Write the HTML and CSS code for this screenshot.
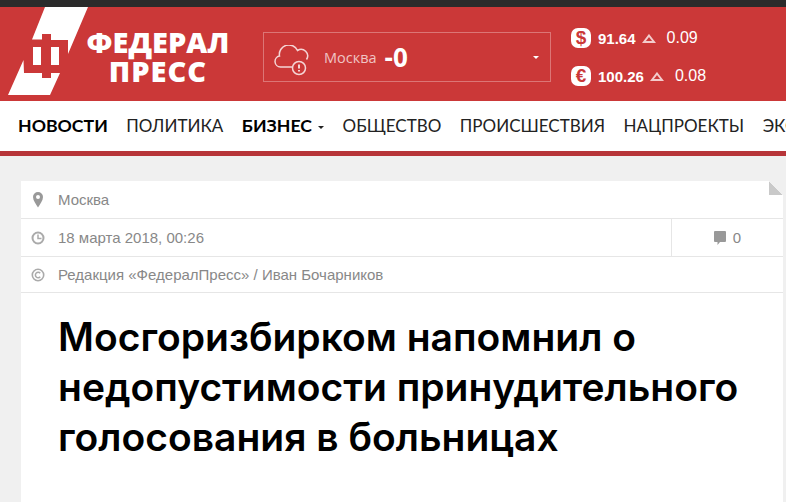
FILE: index.html
```html
<!DOCTYPE html>
<html lang="ru">
<head>
<meta charset="utf-8">
<title>ФедералПресс</title>
<link rel="stylesheet" href="styles.css">
</head>
<body>
<div class="topbar"></div>
<header class="head">
  <div class="logo">
    <svg class="logo-mark" width="90" height="94" viewBox="0 0 90 94">
      <path fill="#fff" d="M45 0H88L68 47V33H51V27H42V32.500H32Z"/>
      <path fill="#fff" d="M23.500 53L24 66H42V71H51V66H60L50 88H8Z"/>
      <path fill="#fff" d="M33 40H41V58H33ZM51 40H59V58H51Z"/>
    </svg>
    <div class="logo-text"><span>ФЕДЕРАЛ</span><span class="logo-second">ПРЕСС</span></div>
  </div>
  <div class="weather">
    <svg class="cloud" width="36" height="32" viewBox="0 0 36 32" fill="none" stroke="#f5d5d5" stroke-width="1.500">
      <path d="M18 22H6.500a5.500 5.500 0 0 1-1-10.900A9.500 9.500 0 0 1 23.500 5.500a6.500 6.500 0 0 1 9 9"/>
      <circle cx="25" cy="23" r="6.500"/>
      <path d="M25 19.500v4M25 25v1.500" stroke-width="2"/>
    </svg>
    <span class="city">Москва</span>
    <span class="temp">-0</span>
    <span class="caret"></span>
  </div>
  <div class="rates">
    <div class="rate">
      <span class="cur">$</span><b>91.64</b>
      <svg class="tri" width="14" height="9" viewBox="0 0 14 9"><path d="M7 1.500L12 8H2Z" fill="none" stroke="#f3cccc" stroke-width="2"/></svg>
      <span>0.09</span>
    </div>
    <div class="rate">
      <span class="cur">€</span><b>100.26</b>
      <svg class="tri" width="14" height="9" viewBox="0 0 14 9"><path d="M7 1.500L12 8H2Z" fill="none" stroke="#f3cccc" stroke-width="2"/></svg>
      <span>0.08</span>
    </div>
  </div>
</header>
<nav class="nav">
  <a class="strong">НОВОСТИ</a>
  <a>ПОЛИТИКА</a>
  <a class="strong drop">БИЗНЕС</a>
  <a>ОБЩЕСТВО</a>
  <a>ПРОИСШЕСТВИЯ</a>
  <a>НАЦПРОЕКТЫ</a>
  <a>ЭКОНОМИКА</a>
</nav>
<main class="card">
  <div class="row">
    <svg class="ico" width="14" height="16" viewBox="0 0 14 16"><path fill="#999" fill-rule="evenodd" d="M7 0a5 5 0 0 1 5 5c0 3.500-3 7-5 10.500C5 12 2 8.500 2 5a5 5 0 0 1 5-5Zm0 3a2 2 0 1 0 0 4 2 2 0 0 0 0-4Z"/></svg>
    <span>Москва</span>
  </div>
  <div class="row split">
    <div class="cell">
      <svg class="ico" width="14" height="14" viewBox="0 0 14 14" fill="none" stroke="#aaa" stroke-width="2"><circle cx="7" cy="7" r="5.500"/><path d="M7 3.500V7.500H10.500" stroke-width="1.500"/></svg>
      <span>18 марта 2018, 00:26</span>
    </div>
    <div class="comments">
      <svg width="12" height="14" viewBox="0 0 12 14"><path fill="#999" d="M1 0h10a1 1 0 0 1 1 1v9a1 1 0 0 1-1 1H6L3.500 14V11H1a1 1 0 0 1-1-1V1a1 1 0 0 1 1-1Z"/></svg>
      <span>0</span>
    </div>
  </div>
  <div class="row short">
    <svg class="ico" width="14" height="14" viewBox="0 0 14 14" fill="none" stroke="#aaa"><circle cx="7" cy="7" r="5.700" stroke-width="1.600"/><path d="M9.200 5.300a2.700 2.700 0 1 0 0 3.400" stroke-width="1.500"/></svg>
    <span>Редакция «ФедералПресс» / Иван Бочарников</span>
  </div>
  <h1>Мосгоризбирком напомнил о недопустимости принудительного голосования в больницах</h1>
  <span class="fold"></span>
</main>
</body>
</html>
```
FILE: styles.css
```css
* { box-sizing: border-box; }
html, body { margin: 0; height: 100%; overflow: hidden; }
body { background: #f0f0f0; font-family: "Liberation Sans", Arial, sans-serif; }
.topbar { height: 7px; background: #2b2b2b; }
.head {
  height: 94px;
  background: #cb3838;
  display: flex;
  align-items: flex-start;
}
.logo { width: 263px; display: flex; flex: none; }
.logo-mark { flex: none; }
.logo-text {
  display: flex;
  flex-direction: column;
  align-items: center;
  width: 140px;
  margin-left: -2px;
  padding-top: 20px;
  color: #fff;
  font: 800 29px/29px "Open Sans", sans-serif;
}
.logo-second { letter-spacing: 1px; }
.weather {
  flex: none;
  width: 288px;
  height: 50px;
  margin-top: 25px;
  border: 1px solid #dc7676;
  display: flex;
  align-items: center;
  padding: 0 11px 0 10px;
}
.cloud { flex: none; margin-right: 14px; margin-top: 8px; }
.city { color: #f0c4c4; font: 14.500px "Open Sans", sans-serif; }
.temp { color: #fff; font: 700 26px "Open Sans", sans-serif; margin-left: 8px; }
.caret {
  margin-left: auto;
  border: 3px solid transparent;
  border-top: 3px solid #fff;
  border-bottom: 0;
}
.rates { margin-left: 20px; padding-top: 21px; display: flex; flex-direction: column; gap: 18px; }
.rate { display: flex; align-items: center; height: 20px; color: #fff; font-size: 16px; }
.cur {
  width: 20px; height: 20px;
  background: #fff; border-radius: 7px;
  color: #cb3838; font-weight: 700; font-size: 19px; line-height: 20px; text-align: center;
  margin-right: 7px;
}
.rate b { margin-right: 6px; font-size: 15px; }
.tri { flex: none; margin-right: 11px; }
.nav {
  height: 55px;
  background: #fff;
  border-bottom: 5px solid #b73539;
  display: flex;
  align-items: center;
  gap: 18.500px;
  padding: 0 0 2px 18px;
  white-space: nowrap;
  overflow: hidden;
  font: 17px Lato, sans-serif;
  color: #222;
}
.strong { font-weight: 700; font-size: 17.700px; color: #000; }
.drop::after {
  content: "";
  display: inline-block;
  margin-left: 6px;
  vertical-align: 3px;
  border: 3px solid transparent;
  border-top-color: #222;
  border-bottom: 0;
}
.card {
  position: relative;
  margin: 25px 3px 0 21px;
  background: #fff;
  height: 321px;
}
.row {
  display: flex;
  align-items: center;
  height: 38px;
  border-bottom: 1px solid #e6e6e6;
  padding-left: 10px;
  color: #888;
  font-size: 15px;
}
.row.short { height: 36px; }
.row.split { padding: 0; }
.cell { display: flex; align-items: center; flex: 1; height: 100%; padding-left: 10px; }
.ico { flex: none; margin-right: 13px; }
.comments {
  width: 112px; height: 100%;
  border-left: 1px solid #e6e6e6;
  display: flex; align-items: center; justify-content: center; gap: 7px;
}
h1 {
  margin: 19px 0 0 37px;
  color: #000;
  font: 600 39px/50px Inter, sans-serif;
  width: 700px;
}
.fold {
  position: absolute;
  top: 0; right: 0;
  width: 14px; height: 14px;
  background: linear-gradient(to top right, #c9c9c9 50%, #f0f0f0 50%);
}
```
